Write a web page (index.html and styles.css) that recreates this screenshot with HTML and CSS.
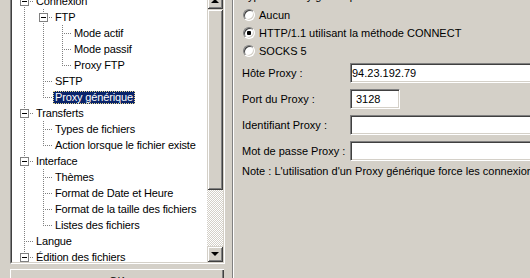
FILE: index.html
```html
<!DOCTYPE html>
<html lang="fr">
<head>
    <meta charset="UTF-8">
    <meta name="viewport" content="width=device-width, initial-scale=1.0">
    <title>Paramètres - Proxy générique</title>
    <link rel="stylesheet" href="styles.css">
</head>
<body>

    <div class="window">
        <!-- Page tree -->
        <div class="left">
            <div class="tree-frame">
                <div class="tree">
                    <ul class="nodes">
                        <li class="node"><span class="g tee"><span class="box"></span></span><span class="label">Connexion</span></li>
                        <li class="node"><span class="g pipe"></span><span class="g tee"><span class="box"></span></span><span class="label">FTP</span></li>
                        <li class="node"><span class="g pipe"></span><span class="g pipe"></span><span class="g tee"></span><span class="label">Mode actif</span></li>
                        <li class="node"><span class="g pipe"></span><span class="g pipe"></span><span class="g tee"></span><span class="label">Mode passif</span></li>
                        <li class="node"><span class="g pipe"></span><span class="g pipe"></span><span class="g ell"></span><span class="label">Proxy FTP</span></li>
                        <li class="node"><span class="g pipe"></span><span class="g tee"></span><span class="label">SFTP</span></li>
                        <li class="node"><span class="g pipe"></span><span class="g ell"></span><span class="label selected">Proxy générique</span></li>
                        <li class="node"><span class="g tee"><span class="box"></span></span><span class="label">Transferts</span></li>
                        <li class="node"><span class="g pipe"></span><span class="g tee"></span><span class="label">Types de fichiers</span></li>
                        <li class="node"><span class="g pipe"></span><span class="g ell"></span><span class="label">Action lorsque le fichier existe</span></li>
                        <li class="node"><span class="g tee"><span class="box"></span></span><span class="label">Interface</span></li>
                        <li class="node"><span class="g pipe"></span><span class="g tee"></span><span class="label">Thèmes</span></li>
                        <li class="node"><span class="g pipe"></span><span class="g tee"></span><span class="label">Format de Date et Heure</span></li>
                        <li class="node"><span class="g pipe"></span><span class="g tee"></span><span class="label">Format de la taille des fichiers</span></li>
                        <li class="node"><span class="g pipe"></span><span class="g ell"></span><span class="label">Listes des fichiers</span></li>
                        <li class="node"><span class="g tee"></span><span class="label">Langue</span></li>
                        <li class="node"><span class="g tee"><span class="box"></span></span><span class="label">Édition des fichiers</span></li>
                    </ul>

                    <div class="scrollbar">
                        <div class="sb-btn"><span class="arrow up"></span></div>
                        <div class="sb-thumb"></div>
                        <div class="sb-track"></div>
                        <div class="sb-btn"><span class="arrow down"></span></div>
                    </div>
                </div>
            </div>
            <button class="btn">OK</button>
        </div>

        <div class="divider"></div>

        <!-- Settings page -->
        <div class="panel">
            <div class="group-title">Type de Proxy générique :</div>
            <div class="radios">
                <label class="radio"><span class="dot"></span>Aucun</label>
                <label class="radio"><span class="dot checked"></span>HTTP/1.1 utilisant la méthode CONNECT</label>
                <label class="radio"><span class="dot"></span>SOCKS 5</label>
            </div>

            <div class="form">
                <div class="field">
                    <span class="field-label">Hôte Proxy :</span>
                    <input class="edit wide" type="text" value="94.23.192.79">
                </div>
                <div class="field">
                    <span class="field-label">Port du Proxy :</span>
                    <input class="edit port" type="text" value="3128">
                </div>
                <div class="field">
                    <span class="field-label">Identifiant Proxy :</span>
                    <input class="edit wide" type="text" value="">
                </div>
                <div class="field">
                    <span class="field-label">Mot de passe Proxy :</span>
                    <input class="edit wide" type="password" value="">
                </div>
            </div>

            <p class="note">Note : L'utilisation d'un Proxy générique force les connexions</p>
        </div>
    </div>

</body>
</html>
```

FILE: styles.css
```css
body {
    font-family: 'Liberation Sans', Arial, sans-serif;
    font-size: 11px;
    color: #000;
    margin: 0;
    padding: 0;
    background-color: #d4d0c8;
    overflow: hidden;
    height: 278px;
}

.window {
    display: flex;
    margin-top: -9px; /* dialog is scrolled a little */
}

/* ---------- left column ---------- */

.left {
    width: 225px;
    padding-left: 10px;
    box-sizing: border-box;
    flex-shrink: 0;
}

.tree-frame {
    height: 273px;
    box-sizing: border-box;
    border: 1px solid;
    border-color: #808080 #fff #fff #808080;
}

.tree {
    height: 100%;
    box-sizing: border-box;
    border: 1px solid;
    border-color: #404040 #d4d0c8 #d4d0c8 #404040;
    background-color: #fff;
    display: flex;
}

.nodes {
    list-style: none;
    margin: 0;
    padding: 0 0 0 3px;
    flex: 1;
    overflow: hidden;
}

.node {
    display: flex;
    align-items: flex-start;
    height: 16px;
    white-space: nowrap;
}

/* one 19px guide column per tree level */
.g {
    width: 19px;
    height: 16px;
    flex-shrink: 0;
    background-repeat: no-repeat;
}

.pipe {
    background-image: repeating-linear-gradient(to bottom, #808080 0 1px, transparent 1px 2px);
    background-size: 1px 16px;
    background-position: 9px 0;
}

.tee,
.ell {
    background-image:
        repeating-linear-gradient(to bottom, #808080 0 1px, transparent 1px 2px),
        repeating-linear-gradient(to right, #808080 0 1px, transparent 1px 2px);
    background-size: 1px 16px, 9px 1px;
    background-position: 9px 0, 11px 8px;
}

.ell {
    background-size: 1px 9px, 9px 1px;
}

.box {
    display: block;
    width: 9px;
    height: 9px;
    box-sizing: border-box;
    margin: 4px 0 0 5px;
    border: 1px solid #808080;
    background: linear-gradient(#000, #000) center / 5px 1px no-repeat, #fff;
}

.label {
    margin-top: 2px;
    padding: 0 2px;
    line-height: 13px;
    height: 13px;
    letter-spacing: -0.15px;
}

.label.selected {
    background-color: #0a246a;
    color: #fff;
    outline: 1px dotted #e8d890;
    outline-offset: -1px;
}

/* classic scrollbar */
.scrollbar {
    width: 16px;
    display: flex;
    flex-direction: column;
    flex-shrink: 0;
}

.sb-btn,
.sb-thumb {
    background-color: #d4d0c8;
    box-shadow: inset 1px 1px #d4d0c8, inset -1px -1px #404040, inset 2px 2px #fff, inset -2px -2px #808080;
}

.sb-btn {
    height: 16px;
    display: flex;
    align-items: center;
    justify-content: center;
}

.sb-thumb {
    height: 181px;
}

.sb-track {
    flex: 1;
    background-image: conic-gradient(#fff 25%, #d4d0c8 0 50%, #fff 0 75%, #d4d0c8 0);
    background-size: 2px 2px;
}

.arrow {
    width: 0;
    height: 0;
    border-left: 4px solid transparent;
    border-right: 4px solid transparent;
}

.arrow.up {
    border-bottom: 4px solid #000;
    margin-top: -1px;
}

.arrow.down {
    border-top: 4px solid #000;
}

.btn {
    display: block;
    width: 214px;
    height: 23px;
    margin-top: 5px;
    padding: 2px 0 0;
    border: none;
    font: inherit;
    line-height: 13px;
    text-align: center;
    vertical-align: top;
    background-color: #d4d0c8;
    box-shadow: inset 1px 1px #fff, inset -1px -1px #404040, inset -2px -2px #808080;
}

.divider {
    margin-left: 7px;
    width: 0;
    border-left: 1px solid #808080;
    border-right: 1px solid #fff;
    height: 290px;
    flex-shrink: 0;
}

/* ---------- right panel ---------- */

.panel {
    flex: 1;
    padding-left: 8px;
    white-space: nowrap;
}

.group-title {
    margin-top: -1px;
    line-height: 13px;
}

.radios {
    margin-top: 3px;
}

.radio {
    display: flex;
    align-items: center;
    height: 18px;
    padding-left: 1px;
}

.dot {
    width: 12px;
    height: 12px;
    box-sizing: border-box;
    margin-right: 4px;
    border-radius: 50%;
    border: 1px solid;
    border-color: #808080 #fff #fff #808080;
    box-shadow: inset 1px 1px #404040, inset -1px -1px #d4d0c8;
    background-color: #fff;
}

.dot.checked {
    background: radial-gradient(circle, #000 0 2px, #fff 2.5px);
}

.form {
    margin-top: 3px;
    display: flex;
    flex-direction: column;
    gap: 6px;
}

.field {
    display: flex;
    align-items: center;
    height: 20px;
}

.field-label {
    width: 108px;
    flex-shrink: 0;
}

.edit {
    height: 20px;
    box-sizing: border-box;
    margin: 0;
    padding: 0 0 0 1px;
    font: inherit;
    color: #000;
    background-color: #fff;
    border: 1px solid;
    border-color: #808080 #fff #fff #808080;
    box-shadow: inset 1px 1px #404040, inset -1px -1px #d4d0c8;
    outline: none;
    flex-shrink: 0;
}

.edit.wide {
    width: 220px;
}

.edit.port {
    width: 50px;
    padding-left: 5px;
}

.note {
    margin: 4px 0 0;
    line-height: 13px;
}
```
